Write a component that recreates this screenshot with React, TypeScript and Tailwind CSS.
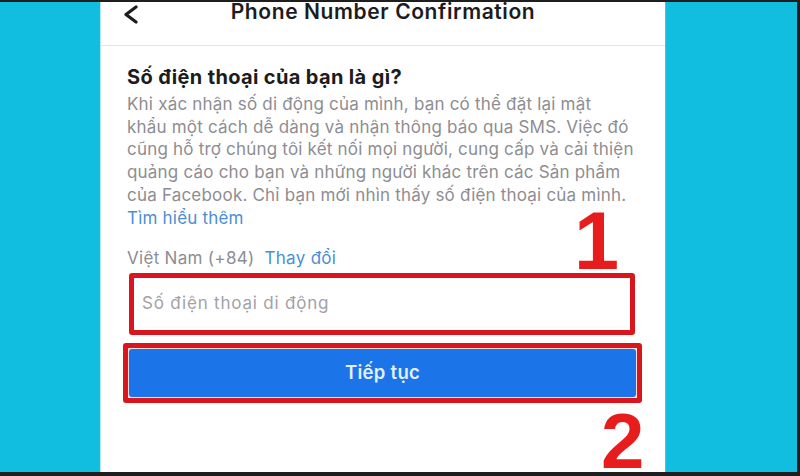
import React from 'react';

const sans = { fontFamily: 'Inter, "Noto Sans", sans-serif' };
const digits = { fontFamily: '"Liberation Sans", Arial, sans-serif' };

function BackChevron() {
  return (
    <svg width="16" height="20" viewBox="0 0 16 20" fill="none">
      <polyline
        points="13,3 3,10.5 13,18"
        stroke="#1c1c1e"
        strokeWidth="3.2"
        strokeLinecap="round"
        strokeLinejoin="round"
      />
    </svg>
  );
}

export default function App() {
  return (
    <div className="w-[800px] h-[476px] flex bg-[#12bee0] border-t-2 border-r-[3px] border-b-[4px] border-[#1e1e1e] overflow-hidden">
      <div className="w-[100px] shrink-0" />

      <div
        className="relative w-[565px] shrink-0 bg-white border-l border-[#b9e8f2] flex flex-col"
        style={sans}
      >
        {/* header */}
        <div className="grid grid-cols-[1fr_auto_1fr] h-[44px] border-b border-[#e3e3e6]">
          <div className="pl-[22px] pt-[2px]">
            <BackChevron />
          </div>
          <div className="text-[21px] leading-[20px] font-semibold text-[#1c1c1e] tracking-[0.6px]">
            Phone Number Confirmation
          </div>
          <div />
        </div>

        <div className="pl-[26px] flex flex-col">
          <h1 className="mt-[19px] text-[20px] leading-[24px] font-bold text-[#1c1c1e] tracking-[0.35px]">
            Số điện thoại của bạn là gì?
          </h1>
          <p className="mt-[4px] text-[17px] leading-[22.7px] text-[#8d8d92] tracking-[0.2px]">
            Khi xác nhận số di động của mình, bạn có thể đặt lại mật
            <br />
            khẩu một cách dễ dàng và nhận thông báo qua SMS. Việc đó
            <br />
            cũng hỗ trợ chúng tôi kết nối mọi người, cung cấp và cải thiện
            <br />
            quảng cáo cho bạn và những người khác trên các Sản phẩm
            <br />
            của Facebook. Chỉ bạn mới nhìn thấy số điện thoại của mình.
            <br />
            <span className="text-[#4a8fd4]">Tìm hiểu thêm</span>
          </p>

          <div className="mt-[18px] text-[17px] leading-[22.5px] text-[#8d8d92] tracking-[0.3px] flex gap-[10px]">
            <span>Việt Nam (+84)</span>
            <span className="text-[#4a8fd4]">Thay đổi</span>
          </div>

          <div className="mt-[3px] ml-[2px] w-[506px] h-[62px] border-[5px] border-[#d9151d] rounded-[3px] flex items-center px-[8px]">
            <span className="text-[17px] tracking-[0.8px] text-[#a2a2a7]">Số điện thoại di động</span>
          </div>

          <div className="mt-[8px] -ml-[4px] w-[519px] h-[60px] border-[5px] border-[#d9151d] rounded-[3px] p-[1px] bg-[#f7dcdc]">
            <div className="h-full rounded-[3px] bg-[#1b74e8] flex items-center justify-center">
              <span className="text-[18.5px] font-semibold text-[#e4efff] tracking-[0.3px]">Tiếp tục</span>
            </div>
          </div>
        </div>

        {/* annotation numbers */}
        <span
          className="absolute left-[473px] top-[199px] text-[81px] leading-none font-bold text-[#e71d1d]"
          style={digits}
        >
          1
        </span>
        <span
          className="absolute left-[500px] top-[409px] text-[78px] leading-[60px] font-bold text-[#e71d1d]"
          style={digits}
        >
          2
        </span>
      </div>

      <div className="flex-1 border-l border-[#6fb5c4]" />
    </div>
  );
}
